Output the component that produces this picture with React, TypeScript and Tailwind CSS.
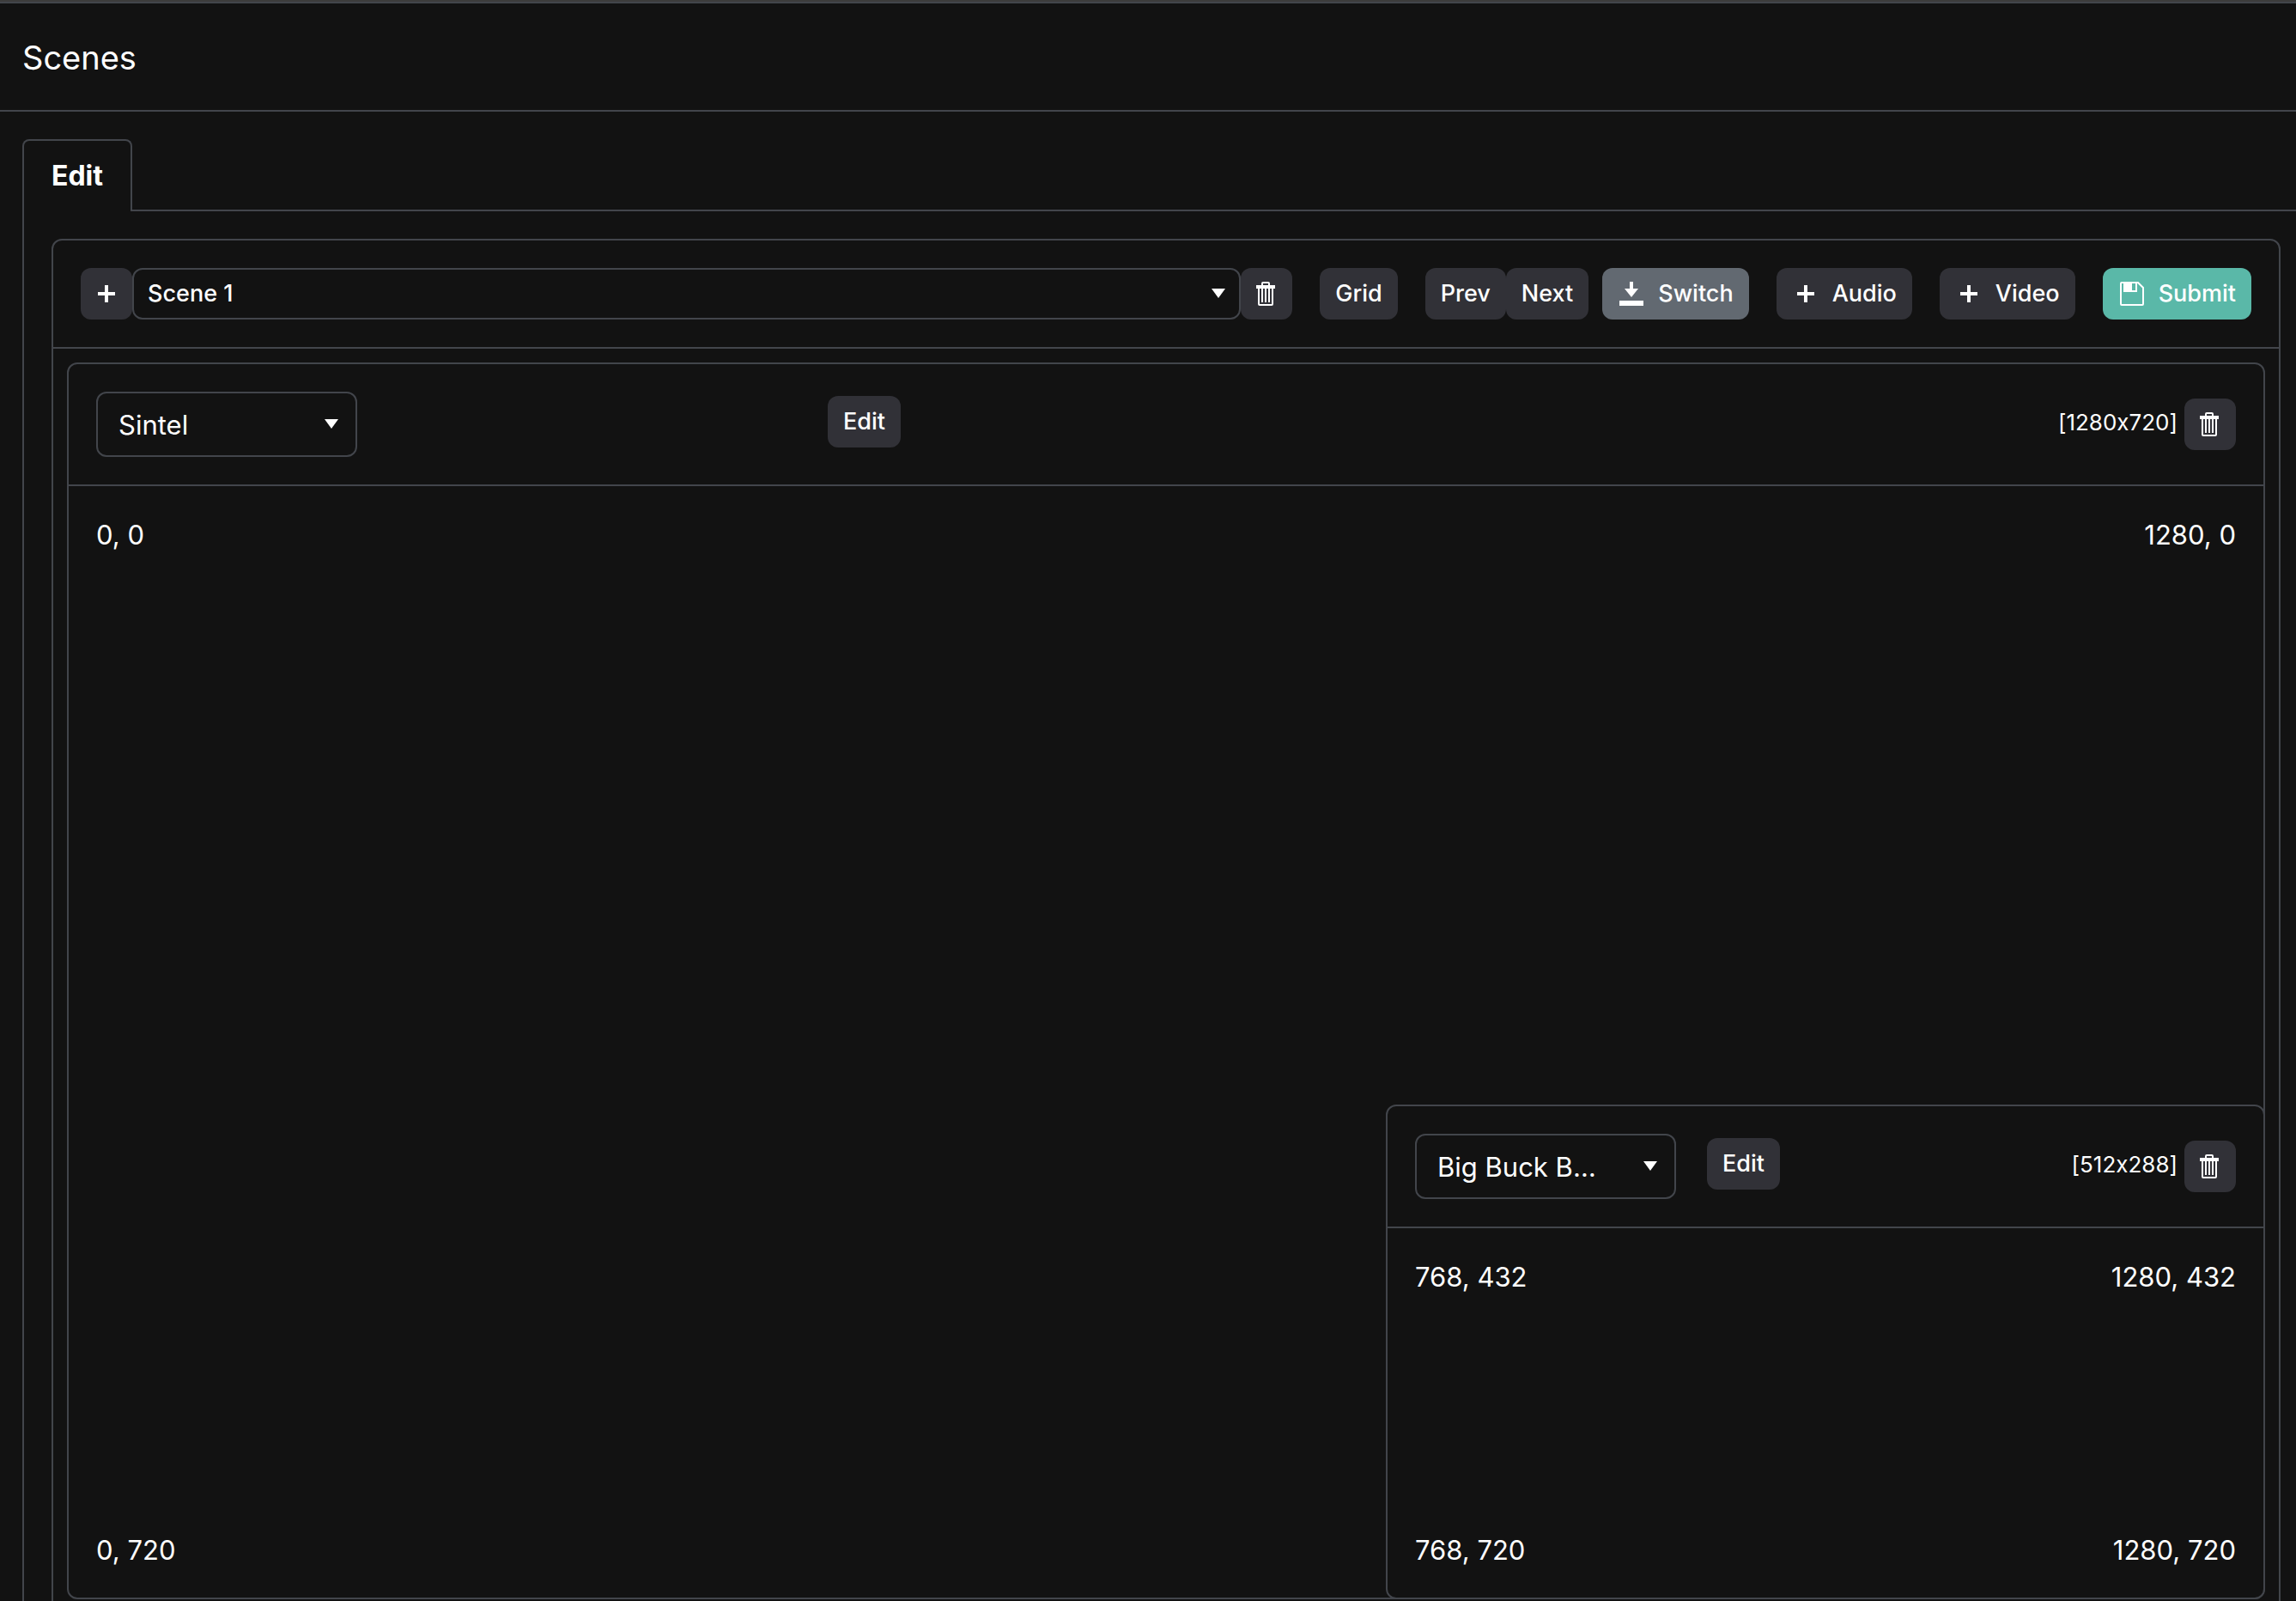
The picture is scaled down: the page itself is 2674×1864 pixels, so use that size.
import { useState } from 'react';
import type { ReactNode } from 'react';

type Source = {
  name: string;
  x: number;
  y: number;
  width: number;
  height: number;
};

const CANVAS_WIDTH = 1280;
const CANVAS_HEIGHT = 720;

const sources: Source[] = [
  { name: 'Sintel', x: 0, y: 0, width: 1280, height: 720 },
  { name: 'Big Buck Bunny', x: 768, y: 432, width: 512, height: 288 },
];

const variants = {
  default: 'bg-[#313137]',
  muted: 'bg-[#626971]',
  primary: 'bg-[#5ab8a8]',
};

function PlusIcon() {
  return (
    <svg viewBox="0 0 20 20" className="w-5 h-5" fill="currentColor" aria-hidden="true">
      <path d="M8 0h4v8h8v4h-8v8H8v-8H0V8h8z" />
    </svg>
  );
}

function TrashIcon() {
  return (
    <svg viewBox="0 0 24 28" className="w-6 h-7" fill="none" stroke="currentColor" strokeWidth="2" aria-hidden="true">
      <path d="M7 5V2q0-1 1-1h6q1 0 1 1v3" />
      <path d="M0 4h22v4H0z" fill="currentColor" stroke="none" />
      <path d="M3 8v18q0 1 1 1h14q1 0 1-1V8" />
      <path d="M7 8v16M11 8v16M15 8v16" />
    </svg>
  );
}

function DownloadIcon() {
  return (
    <svg viewBox="0 0 28 28" className="w-7 h-7" fill="currentColor" aria-hidden="true">
      <path d="M12 0h4v8h6l-8 10-8-10h6zM0 22h28v6H0z" />
    </svg>
  );
}

function SaveIcon() {
  return (
    <svg viewBox="0 0 28 28" className="w-7 h-7" fill="none" stroke="currentColor" strokeWidth="2" aria-hidden="true">
      <path d="M2 1h19l6 6v19q0 1-1 1H2q-1 0-1-1V2q0-1 1-1z" />
      <path d="M4 1h16v11H4zM14 2v8h4V2z" fill="currentColor" fillRule="evenodd" stroke="none" />
    </svg>
  );
}

function ArrowIcon({ className }: { className: string }) {
  return (
    <svg viewBox="0 0 16 11" className={`w-4 h-[11px] absolute pointer-events-none ${className}`} fill="currentColor" aria-hidden="true">
      <path d="M0 0h16L8 11z" />
    </svg>
  );
}

function Button({ variant = 'default', icon, label, children }: {
  variant?: keyof typeof variants;
  icon?: ReactNode;
  label?: string;
  children?: ReactNode;
}) {
  return (
    <button
      type="button"
      aria-label={label}
      className={`h-[60px] min-w-[60px] shrink-0 flex items-center justify-center rounded-xl text-[27px] leading-10 font-medium ${children ? 'px-[18px]' : ''} ${variants[variant]}`}
    >
      {icon && <span className={`w-7 flex justify-center ${children ? 'ml-0.5 mr-[17px]' : ''}`}>{icon}</span>}
      {children}
    </button>
  );
}

function SourceCard({ source }: { source: Source }) {
  const { name, x, y, width, height } = source;
  const right = x + width;
  const bottom = y + height;

  return (
    <section
      className="absolute flex flex-col bg-[#121212] border-2 border-[#42454b] rounded-xl"
      style={{
        left: `${(x / CANVAS_WIDTH) * 100}%`,
        top: `${(y / CANVAS_HEIGHT) * 100}%`,
        width: `${(width / CANVAS_WIDTH) * 100}%`,
        height: `${(height / CANVAS_HEIGHT) * 100}%`,
      }}
    >
      <header className="grid grid-cols-3 gap-16 p-8 border-b-2 border-[#42454b]">
        <div className="relative w-[304px]">
          <select
            aria-label="Source"
            defaultValue={name}
            className="appearance-none w-full h-[76px] pt-0.5 pl-6 pr-20 text-[31px] leading-10 text-ellipsis bg-transparent border-2 border-[#42454b] rounded-xl"
          >
            {sources.map((s) => (
              <option key={s.name}>{s.name}</option>
            ))}
          </select>
          <ArrowIcon className="right-[22px] top-8" />
        </div>
        <div className="pt-[5px]">
          <Button>Edit</Button>
        </div>
        <div className="flex items-center justify-end gap-2">
          <span className="text-[26px] leading-10 pb-1">{`[${width}x${height}]`}</span>
          <Button label="Delete source" icon={<TrashIcon />} />
        </div>
      </header>

      <div className="flex-1 grid grid-cols-2 content-between px-8 pt-[33px] pb-[31px] text-[31px] leading-12">
        <span>{x}, {y}</span>
        <span className="text-right">{right}, {y}</span>
        <span>{x}, {bottom}</span>
        <span className="text-right">{right}, {bottom}</span>
      </div>
    </section>
  );
}

export default function App() {
  const [scene, setScene] = useState('Scene 1');

  return (
    <div className="min-h-screen overflow-hidden bg-[#121212] text-white font-['Inter',sans-serif] [font-feature-settings:'calt'_0] border-t-2 border-[#3c3c3c]">
      {/* HEADER */}
      <header className="px-[26px] pt-[38px] pb-9 border-y-2 border-[#42454b]">
        <h1 className="text-[38px] leading-[50px]">Scenes</h1>
      </header>

      {/* TABS */}
      <main className="pl-[26px] pt-8">
        <div role="tablist" className="flex">
          <button
            type="button"
            role="tab"
            aria-selected="true"
            className="h-[84px] px-8 text-[32px] leading-12 font-bold border-2 border-b-0 border-[#42454b] rounded-t-lg"
          >
            Edit
          </button>
          <div className="flex-1 border-b-2 border-[#42454b]"></div>
        </div>

        <div role="tabpanel" className="border-l-2 border-[#42454b] pl-8 pt-8 pr-[18px] pb-8">
          <div className="border-2 border-[#42454b] rounded-xl">
            {/* TOOLBAR */}
            <div className="flex gap-8 p-8 border-b-2 border-[#42454b]">
              <div className="flex-1 flex">
                <Button label="Add scene" icon={<PlusIcon />} />
                <div className="flex-1 relative">
                  <select
                    aria-label="Scene"
                    value={scene}
                    onChange={(e) => setScene(e.target.value)}
                    className="appearance-none w-full h-[60px] px-4 text-[27px] leading-10 font-medium bg-transparent border-2 border-[#42454b] rounded-xl"
                  >
                    <option>Scene 1</option>
                  </select>
                  <ArrowIcon className="right-[18px] top-6" />
                </div>
                <Button label="Delete scene" icon={<TrashIcon />} />
              </div>
              <Button>Grid</Button>
              <div className="flex">
                <Button>Prev</Button>
                <Button>Next</Button>
                <div className="ml-4">
                  <Button variant="muted" icon={<DownloadIcon />}>Switch</Button>
                </div>
              </div>
              <Button icon={<PlusIcon />}>Audio</Button>
              <Button icon={<PlusIcon />}>Video</Button>
              <Button variant="primary" icon={<SaveIcon />}>Submit</Button>
            </div>

            {/* CANVAS */}
            <div className="p-4">
              <div className="relative aspect-video">
                {sources.map((source) => (
                  <SourceCard key={source.name} source={source} />
                ))}
              </div>
            </div>
          </div>
        </div>
      </main>
    </div>
  );
}
